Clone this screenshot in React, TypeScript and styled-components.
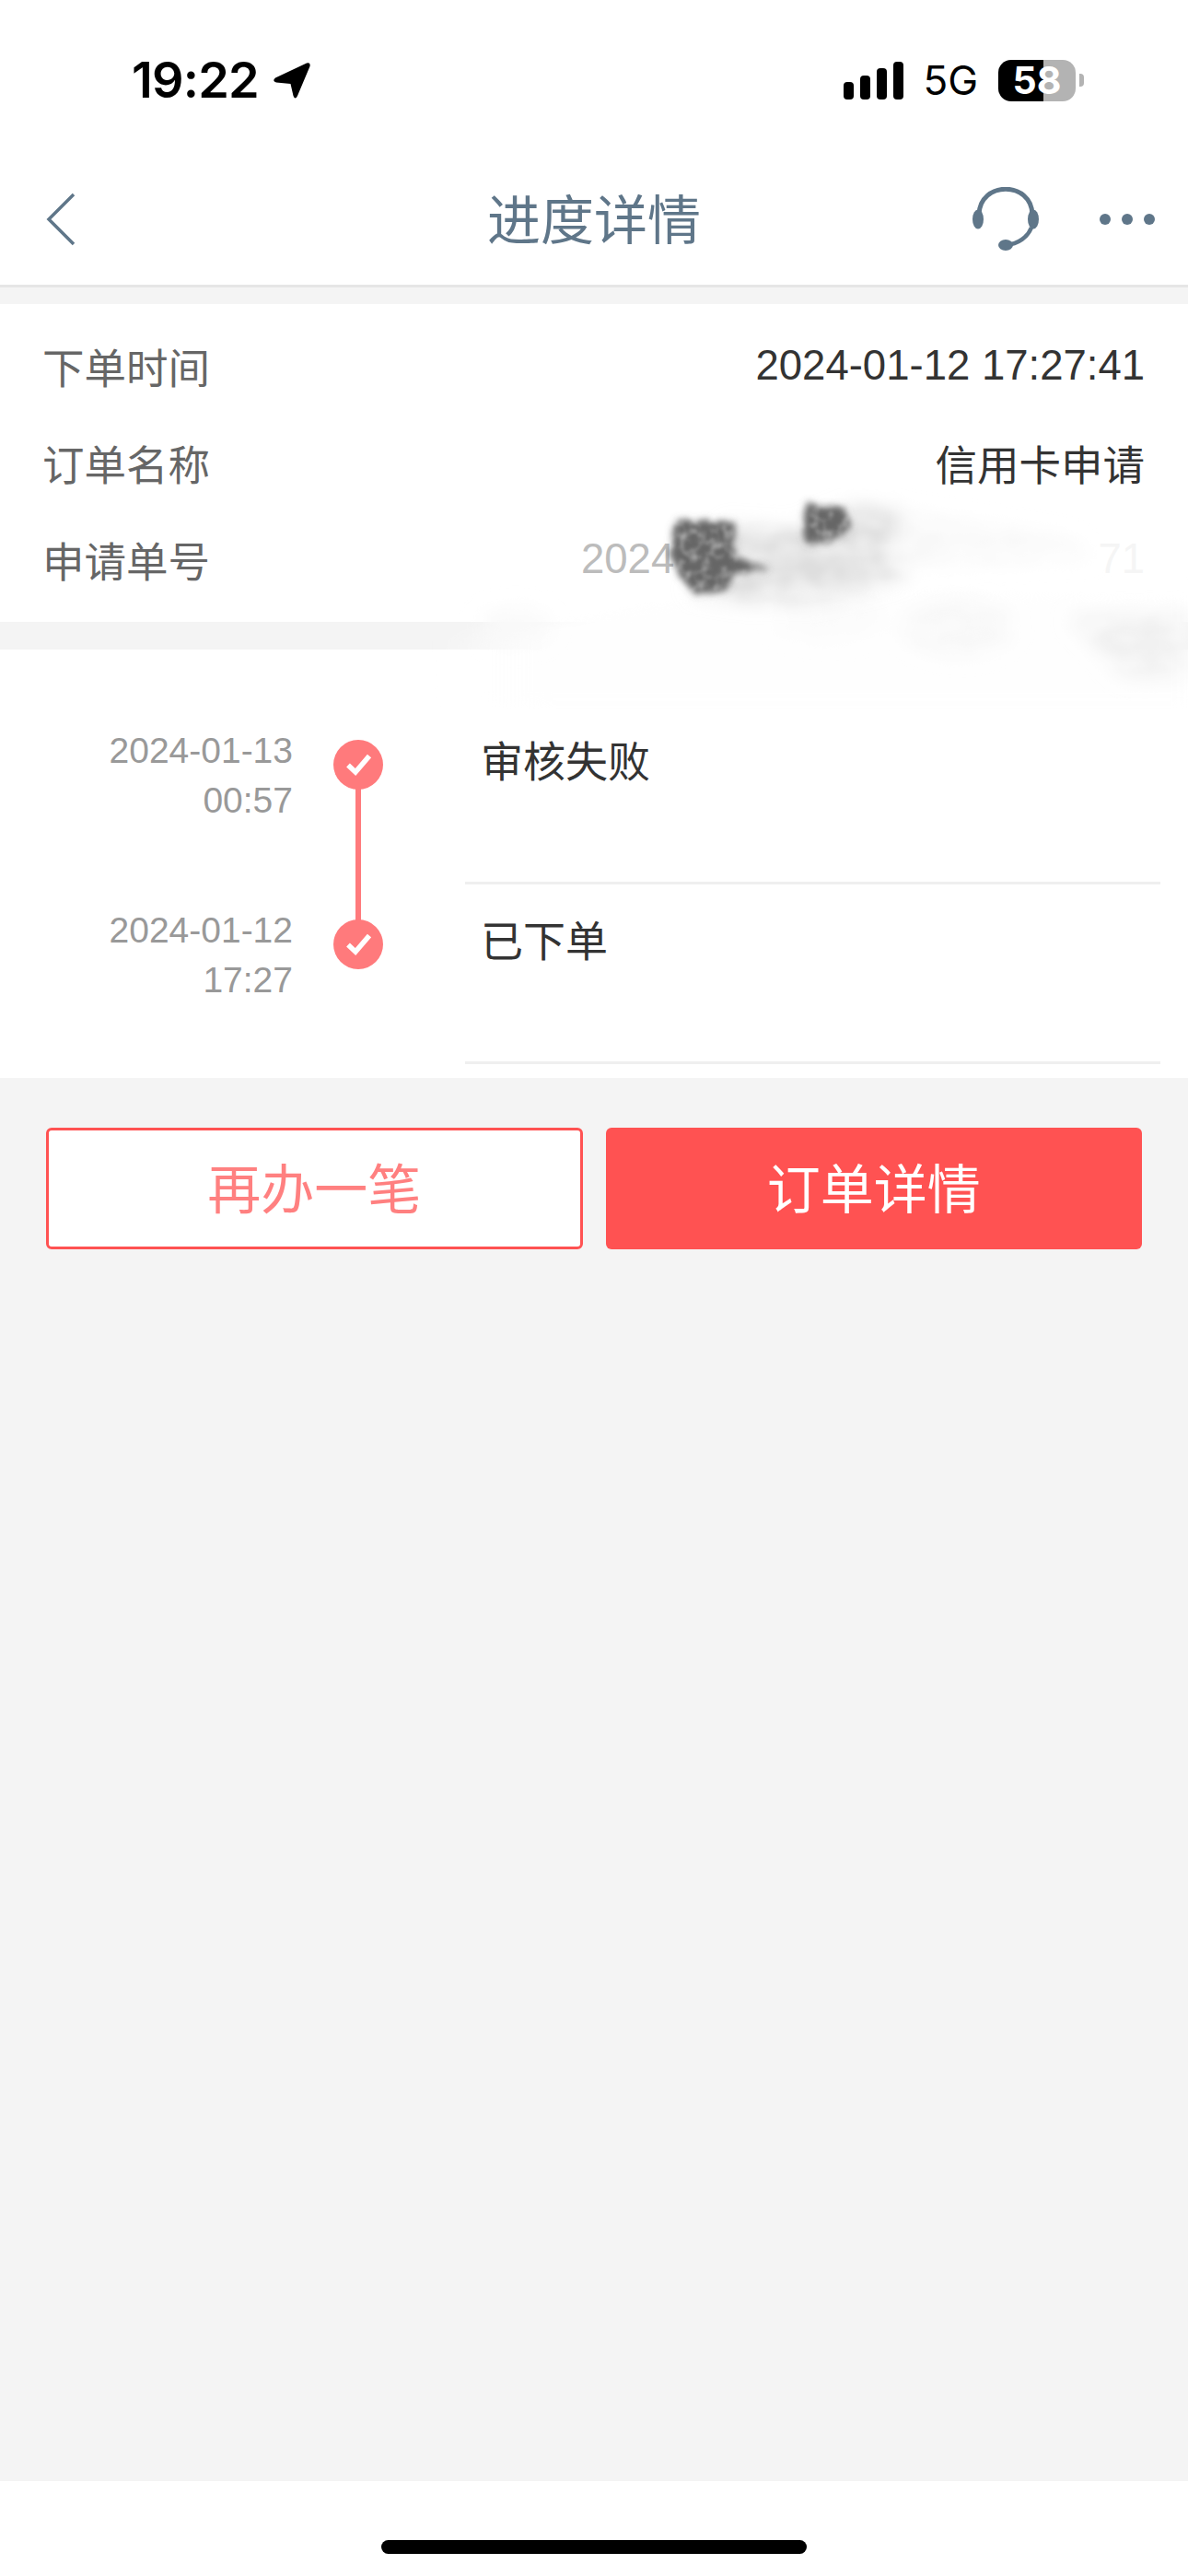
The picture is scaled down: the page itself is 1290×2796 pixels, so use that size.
import styled, { createGlobalStyle } from 'styled-components';

const GlobalStyle = createGlobalStyle`
  html, body {
    margin: 0;
    padding: 0;
    background: #fff;
  }
  * {
    box-sizing: border-box;
  }
`;

const CJK = `"Liberation Sans", "Noto Sans CJK SC", sans-serif`;

const steps = [
  { date: '2024-01-13', time: '00:57', title: '审核失败', hasLine: true },
  { date: '2024-01-12', time: '17:27', title: '已下单', hasLine: false },
];

export default function App() {
  return (
    <PageDiv>
      <GlobalStyle />
      <StatusBarDiv>
        <TimeGroupDiv>
          <TimeSpan>19:22</TimeSpan>
          <svg width="42" height="41" viewBox="0 0 42 41">
            <path
              d="M37 1.5 Q41.5 0.5 40.5 5 L27 37 Q24.5 42 22.5 37 L19.5 24 L4 22.5 Q-1 21 3 17.5 Z"
              fill="#000"
            />
          </svg>
        </TimeGroupDiv>
        <StatusRightDiv>
          <SignalDiv>
            <SignalBar $height={19} />
            <SignalBar $height={26} />
            <SignalBar $height={34} />
            <SignalBar $height={41} />
          </SignalDiv>
          <NetworkSpan>5G</NetworkSpan>
          <BatteryDiv>
            <BatteryBody>58</BatteryBody>
            <BatteryNub />
          </BatteryDiv>
        </StatusRightDiv>
      </StatusBarDiv>

      <NavDiv>
        <NavSideDiv>
          <svg width="34" height="60" viewBox="0 0 34 60">
            <path d="M31 3 L4 30 L31 57" fill="none" stroke="#5f7689" strokeWidth="3.5" />
          </svg>
        </NavSideDiv>
        <NavTitle>进度详情</NavTitle>
        <NavActionsDiv>
          <svg width="72" height="70" viewBox="0 0 72 70">
            <path d="M7 30 C8 -7 64 -7 65 30" fill="none" stroke="#5f7689" strokeWidth="5" />
            <path d="M64 44 C60 54 50 62 36 63" fill="none" stroke="#5f7689" strokeWidth="4.5" />
            <ellipse cx="6" cy="35" rx="6" ry="10.5" fill="#5f7689" />
            <ellipse cx="66" cy="35" rx="6" ry="10.5" fill="#5f7689" />
            <ellipse cx="36" cy="63" rx="8" ry="6" fill="#5f7689" />
          </svg>
          <MoreDiv>
            <MoreDot />
            <MoreDot />
            <MoreDot />
          </MoreDiv>
        </NavActionsDiv>
      </NavDiv>

      <ContentDiv>
        <InfoSection>
          <InfoRow>
            <InfoLabel>下单时间</InfoLabel>
            <InfoValue>2024-01-12 17:27:41</InfoValue>
          </InfoRow>
          <InfoRow>
            <InfoLabel>订单名称</InfoLabel>
            <InfoValue>信用卡申请</InfoValue>
          </InfoRow>
          <InfoRow>
            <InfoLabel>申请单号</InfoLabel>
            <MaskedValue>
              <span>2024</span>
              <MaskedEnd>71</MaskedEnd>
            </MaskedValue>
          </InfoRow>
        </InfoSection>

        <TimelineSection>
          {steps.map(step => (
            <TimelineRow key={step.date}>
              <DateDiv>
                {step.date}
                <br />
                {step.time}
              </DateDiv>
              <DotCell>
                <Dot $hasLine={step.hasLine}>
                  <svg width="27" height="24" viewBox="0 0 27 24">
                    <path d="M2 12.5 L10 20 L25 2.5" fill="none" stroke="#fff" strokeWidth="5.5" />
                  </svg>
                </Dot>
              </DotCell>
              <StepDiv>{step.title}</StepDiv>
            </TimelineRow>
          ))}
        </TimelineSection>

        <ButtonRow>
          <OutlineButton>再办一笔</OutlineButton>
          <FilledButton>订单详情</FilledButton>
        </ButtonRow>

        {/* smudge painted over the order number */}
        <SmudgeSvg width="830" height="240" viewBox="0 0 830 240">
          <defs>
            <linearGradient id="fade" x1="0" x2="1" y1="0" y2="0">
              <stop offset="0" stopColor="#fefefe" stopOpacity="0" />
              <stop offset="0.14" stopColor="#fefefe" stopOpacity="1" />
              <stop offset="1" stopColor="#fefefe" stopOpacity="1" />
            </linearGradient>
            <filter id="haze" x="-20%" y="-40%" width="140%" height="180%">
              <feGaussianBlur stdDeviation="8" />
            </filter>
            <filter id="patch" x="-40%" y="-60%" width="180%" height="220%">
              <feGaussianBlur in="SourceGraphic" stdDeviation="10" result="soft" />
              <feTurbulence type="fractalNoise" baseFrequency="0.03 0.05" numOctaves="2" seed="11" result="noise" />
              <feColorMatrix in="noise" type="matrix" values="0 0 0 0 0  0 0 0 0 0  0 0 0 0 0  0 0 0 1.2 0.2" result="mask" />
              <feComposite in="soft" in2="mask" operator="in" result="mottled" />
              <feGaussianBlur in="mottled" stdDeviation="3" />
            </filter>
            <filter id="ink" x="-40%" y="-40%" width="180%" height="180%">
              <feTurbulence type="fractalNoise" baseFrequency="0.09" numOctaves="2" seed="7" result="noise" />
              <feDisplacementMap in="SourceGraphic" in2="noise" scale="10" result="rough" />
              <feGaussianBlur in="rough" stdDeviation="3.5" result="soft" />
              <feColorMatrix in="noise" type="matrix" values="0 0 0 0 0  0 0 0 0 0  0 0 0 0 0  0 0 0 1.2 0.35" result="mask" />
              <feComposite in="soft" in2="mask" operator="in" result="spotted" />
              <feGaussianBlur in="spotted" stdDeviation="1.5" />
            </filter>
          </defs>
          <g filter="url(#haze)">
            <path d="M20 165 L230 125 L400 105 L830 115 L830 240 L30 240 Z" fill="url(#fade)" />
          </g>
          <g filter="url(#patch)">
            <path d="M700 140 L830 135 L830 205 L760 205 Z" fill="#f0f0f0" />
            <ellipse cx="580" cy="150" rx="60" ry="30" fill="#f7f7f7" />
            <ellipse cx="440" cy="140" rx="60" ry="24" fill="#fbfbfb" />
            <ellipse cx="100" cy="150" rx="40" ry="20" fill="#f9f9f9" />
          </g>
          <g filter="url(#patch)">
            <path d="M330 40 L400 45 L460 20 L515 22 L555 60 L515 100 L420 122 L350 122 L290 112 Z" fill="#dedede" />
            <path d="M515 25 L700 55 L730 75 L500 85 Z" fill="#f8f8f8" />
          </g>
          <g filter="url(#ink)">
            <path d="M272 34 L326 36 L340 40 L338 74 L374 88 L338 92 L328 112 L296 116 L280 98 L268 72 Z" fill="#666" />
            <path d="M418 18 L456 20 L466 44 L440 58 L416 60 L412 40 Z" fill="#666" />
          </g>
        </SmudgeSvg>
      </ContentDiv>

      <FooterDiv>
        <HomeBar />
      </FooterDiv>
    </PageDiv>
  );
}

const PageDiv = styled.div`
  width: 1290px;
  height: 2796px;
  display: flex;
  flex-direction: column;
  background: #f4f4f4;
  font-family: ${CJK};
  overflow: hidden;
`;

const StatusBarDiv = styled.div`
  height: 174px;
  flex-shrink: 0;
  display: flex;
  align-items: center;
  justify-content: space-between;
  padding: 0 113px 0 143px;
  background: #fff;
`;

const TimeGroupDiv = styled.div`
  display: flex;
  align-items: center;
  gap: 15px;
`;

const TimeSpan = styled.span`
  font-family: Inter, sans-serif;
  font-size: 54px;
  font-weight: 600;
  letter-spacing: -0.8px;
  line-height: 1;
  color: #000;
`;

const StatusRightDiv = styled.div`
  display: flex;
  align-items: center;
`;

const SignalDiv = styled.div`
  display: flex;
  align-items: flex-end;
  gap: 7px;
  height: 41px;
`;

const SignalBar = styled.div<{ $height: number }>`
  width: 11px;
  height: ${props => props.$height}px;
  border-radius: 4px;
  background: #000;
`;

const NetworkSpan = styled.span`
  margin: 0 22px 0 21px;
  font-family: Inter, sans-serif;
  font-size: 44px;
  font-weight: 400;
  line-height: 1;
  color: #000;
`;

const BatteryDiv = styled.div`
  display: flex;
  align-items: center;
  gap: 4px;
`;

const BatteryBody = styled.div`
  width: 84px;
  height: 45px;
  border-radius: 14px;
  background: linear-gradient(90deg, #000 0, #000 49px, #b3b3b3 49px, #b3b3b3 100%);
  color: #fff;
  font-family: Inter, sans-serif;
  font-size: 41px;
  font-weight: 700;
  line-height: 45px;
  text-align: center;
`;

const BatteryNub = styled.div`
  width: 5px;
  height: 14px;
  border-radius: 0 4px 4px 0;
  background: #b3b3b3;
`;

const NavDiv = styled.div`
  height: 138px;
  flex-shrink: 0;
  display: grid;
  grid-template-columns: 1fr auto 1fr;
  align-items: center;
  padding: 0 36px 8px 49px;
  background: #fff;
  border-bottom: 3px solid #e6e6e6;
`;

const NavSideDiv = styled.div`
  display: flex;
`;

const NavTitle = styled.div`
  margin-right: 13px;
  padding-top: 5px;
  font-size: 58px;
  color: #5f7689;
  line-height: 1;
`;

const NavActionsDiv = styled.div`
  display: flex;
  align-items: center;
  justify-content: flex-end;
  gap: 66px;
`;

const MoreDiv = styled.div`
  display: flex;
  gap: 12px;
`;

const MoreDot = styled.div`
  width: 12px;
  height: 12px;
  border-radius: 50%;
  background: #5f7689;
`;

const ContentDiv = styled.div`
  position: relative;
  flex: 1;
  padding-top: 18px;
`;

const InfoSection = styled.section`
  padding: 15px 47px 15px 46px;
  background: #fff;
`;

const InfoRow = styled.div`
  height: 105px;
  display: flex;
  align-items: center;
  justify-content: space-between;
  padding-bottom: 2px;
  font-size: 45.5px;
`;

const InfoLabel = styled.span`
  color: #666;
`;

const InfoValue = styled.span`
  color: #333;
`;

const MaskedValue = styled.span`
  width: 612px;
  display: flex;
  justify-content: space-between;
  color: #bcbcbc;
`;

const MaskedEnd = styled.span`
  color: #f5f5f5;
`;

const TimelineSection = styled.section`
  margin-top: 30px;
  padding: 60px 30px 15px 0;
  background: #fff;
`;

const TimelineRow = styled.div`
  height: 195px;
  display: grid;
  grid-template-columns: 318px 187px 1fr;
`;

const DateDiv = styled.div`
  padding-top: 23px;
  text-align: right;
  font-size: 39px;
  line-height: 54px;
  color: #999;
`;

const DotCell = styled.div`
  width: 142px;
  padding-top: 38px;
  display: flex;
  justify-content: center;
`;

const Dot = styled.div<{ $hasLine: boolean }>`
  position: relative;
  width: 54px;
  height: 54px;
  border-radius: 50%;
  background: #ff7a7c;
  display: flex;
  align-items: center;
  justify-content: center;

  &::after {
    content: '';
    display: ${props => (props.$hasLine ? 'block' : 'none')};
    position: absolute;
    top: 52px;
    left: 24px;
    width: 6px;
    height: 144px;
    background: #ff7a7c;
  }
`;

const StepDiv = styled.div`
  padding: 35px 0 0 17px;
  border-bottom: 3px solid #efefef;
  font-size: 46px;
  line-height: 54px;
  color: #333;
`;

const ButtonRow = styled.div`
  margin-top: 54px;
  padding: 0 50px;
  display: grid;
  grid-template-columns: 1fr 1fr;
  gap: 25px;
`;

const OutlineButton = styled.button`
  height: 132px;
  padding: 0 0 6px;
  border: 3px solid #ff5252;
  border-radius: 6px;
  background: #fff;
  color: #ff8080;
  font-family: ${CJK};
  font-size: 58px;
`;

const FilledButton = styled.button`
  height: 132px;
  padding: 0 0 6px;
  border: 0;
  border-radius: 6px;
  background: #ff5252;
  color: #fff;
  font-family: ${CJK};
  font-size: 58px;
`;

const SmudgeSvg = styled.svg`
  position: absolute;
  top: 218px;
  left: 460px;
  pointer-events: none;
`;

const FooterDiv = styled.div`
  height: 103px;
  flex-shrink: 0;
  padding-top: 64px;
  display: flex;
  justify-content: center;
  background: #fff;
`;

const HomeBar = styled.div`
  width: 462px;
  height: 15px;
  border-radius: 8px;
  background: #000;
`;
